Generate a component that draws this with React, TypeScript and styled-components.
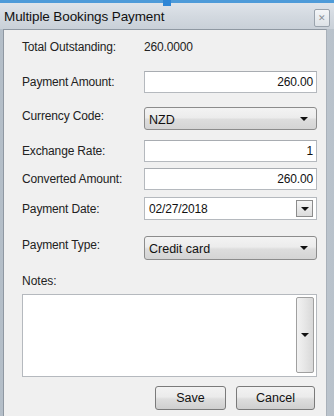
import React from 'react';
import styled, { createGlobalStyle } from 'styled-components';

const GlobalStyle = createGlobalStyle`
  html, body {
    margin: 0;
    padding: 0;
    background: #c9d2db;
  }
  * {
    box-sizing: border-box;
  }
`;

const App = () => {
  return (
    <>
      <GlobalStyle />
      <Window>
        <TopEdge>
          <Handle />
        </TopEdge>
        <TitleBar>
          <Title>Multiple Bookings Payment</Title>
          <CloseButton>✕</CloseButton>
        </TitleBar>
        <Frame>
          <Panel>
            <Row $top={7} $height={20}>
              <Label>Total Outstanding:</Label>
              <Value>260.0000</Value>
            </Row>
            <Row $top={14} $height={22}>
              <Label>Payment Amount:</Label>
              <TextBox>260.00</TextBox>
            </Row>
            <Row $top={14} $height={23}>
              <Label $shift={-3}>Currency Code:</Label>
              <Combo>
                <ComboText>NZD</ComboText>
                <Arrow />
              </Combo>
            </Row>
            <Row $top={10} $height={22}>
              <Label>Exchange Rate:</Label>
              <TextBox>1</TextBox>
            </Row>
            <Row $top={6} $height={22}>
              <Label>Converted Amount:</Label>
              <TextBox>260.00</TextBox>
            </Row>
            <Row $top={7} $height={23}>
              <Label>Payment Date:</Label>
              <DateBox>
                <DateText>02/27/2018</DateText>
                <DropButton>
                  <Arrow />
                </DropButton>
              </DateBox>
            </Row>
            <Row $top={16} $height={24}>
              <Label $shift={-3}>Payment Type:</Label>
              <Combo>
                <ComboText>Credit card</ComboText>
                <Arrow />
              </Combo>
            </Row>
            <NotesLabel>Notes:</NotesLabel>
            <NotesBox>
              <NotesButton>
                <Arrow />
              </NotesButton>
            </NotesBox>
            <Buttons>
              <Button $width={71}>Save</Button>
              <Button $width={79}>Cancel</Button>
            </Buttons>
          </Panel>
        </Frame>
      </Window>
    </>
  );
};

const font = `"Liberation Sans", Arial, sans-serif`;

const Window = styled.div`
  width: 334px;
  height: 416px;
  display: flex;
  flex-direction: column;
  background: linear-gradient(90deg, #b4bec8 0%, #d6dde4 40%, #cfd6dd 70%, #b9c2cb 100%);
  overflow: hidden;
  font-family: ${font};
`;

const TopEdge = styled.div`
  height: 3px;
  background: #4e9bd9;
  position: relative;
`;

const Handle = styled.div`
  position: absolute;
  left: 163px;
  top: 0;
  width: 8px;
  height: 6px;
  background: #2f86d6;
`;

const TitleBar = styled.div`
  height: 26px;
  display: flex;
  align-items: center;
  justify-content: space-between;
  padding: 0 4px;
  background: linear-gradient(180deg, #dfe4ea 0%, #d3d9e0 50%, #c9d0d8 100%);
`;

const Title = styled.div`
  font-size: 13.5px;
  color: #111;
  letter-spacing: -0.1px;
  margin-top: 1px;
`;

const CloseButton = styled.div`
  width: 16px;
  height: 18px;
  border: 1px solid #9aa3ad;
  border-radius: 2px;
  background: linear-gradient(180deg, #f4f6f8 0%, #dde2e7 100%);
  color: #8a9098;
  font-size: 9px;
  display: flex;
  align-items: center;
  justify-content: center;
  margin-top: 3px;
`;

const Frame = styled.div`
  flex: 1;
  padding: 0 7px 0 3px;
`;

const Panel = styled.div`
  height: 100%;
  background: #f0f0f0;
  border-top: 1px solid #8f98a2;
  border-left: 1px solid #8f98a2;
  border-right: 1px solid #a9b1ba;
  padding: 0 9px 0 18px;
  display: flex;
  flex-direction: column;
`;

const Row = styled.div<{ $top: number; $height: number }>`
  display: grid;
  grid-template-columns: 122px 1fr;
  align-items: center;
  margin-top: ${(p) => p.$top}px;
  height: ${(p) => p.$height}px;
`;

const Label = styled.div<{ $shift?: number }>`
  font-size: 12px;
  letter-spacing: -0.15px;
  color: #222;
  transform: translateY(${(p) => p.$shift || 0}px);
`;

const Value = styled.div`
  font-size: 12px;
  letter-spacing: -0.15px;
  color: #222;
`;

const TextBox = styled.div`
  height: 100%;
  background: #fff;
  border: 1px solid #b5b9be;
  border-top-color: #a8acb1;
  font-size: 12px;
  letter-spacing: -0.15px;
  color: #111;
  display: flex;
  align-items: center;
  justify-content: flex-end;
  padding-right: 3px;
`;

const Combo = styled.div`
  height: 100%;
  border: 1px solid #8c8c8c;
  border-radius: 3px;
  background: linear-gradient(180deg, #f3f3f3 0%, #ececec 45%, #dddddd 55%, #d4d4d4 100%);
  display: flex;
  align-items: center;
  justify-content: space-between;
  padding: 0 8px 0 4px;
`;

const ComboText = styled.span`
  font-size: 12.5px;
  color: #111;
  margin-top: 2px;
`;

const Arrow = styled.span`
  width: 0;
  height: 0;
  border-left: 4px solid transparent;
  border-right: 4px solid transparent;
  border-top: 4px solid #111;
`;

const DateBox = styled.div`
  height: 100%;
  background: #fff;
  border: 1px solid #b5b9be;
  display: flex;
  align-items: center;
  justify-content: space-between;
  padding: 0 3px 0 4px;
`;

const DateText = styled.span`
  font-size: 12px;
  letter-spacing: -0.15px;
  color: #111;
`;

const DropButton = styled.div`
  width: 17px;
  height: 17px;
  border: 1px solid #8c8c8c;
  background: linear-gradient(180deg, #f5f5f5 0%, #dcdcdc 100%);
  display: flex;
  align-items: center;
  justify-content: center;
`;

const NotesLabel = styled.div`
  font-size: 12px;
  color: #222;
  margin-top: 14px;
  height: 14px;
`;

const NotesBox = styled.div`
  margin-top: 6px;
  height: 83px;
  background: #fff;
  border: 1px solid #b5b9be;
  display: flex;
  justify-content: flex-end;
  padding: 2px 2px 3px 0;
`;

const NotesButton = styled.div`
  width: 18px;
  border: 1px solid #a0a0a0;
  border-radius: 2px;
  background: linear-gradient(90deg, #f2f2f2 0%, #e6e6e6 50%, #d8d8d8 100%);
  display: flex;
  align-items: center;
  justify-content: center;
`;

const Buttons = styled.div`
  display: flex;
  justify-content: flex-end;
  gap: 10px;
  margin-top: 9px;
  padding-right: 2px;
`;

const Button = styled.div<{ $width: number }>`
  width: ${(p) => p.$width}px;
  height: 24px;
  border: 1px solid #7a7a7a;
  border-radius: 3px;
  background: linear-gradient(180deg, #f2f2f2 0%, #ebebeb 45%, #dddddd 55%, #cfcfcf 100%);
  font-size: 12.5px;
  color: #111;
  display: flex;
  align-items: center;
  justify-content: center;
`;

export default App;
